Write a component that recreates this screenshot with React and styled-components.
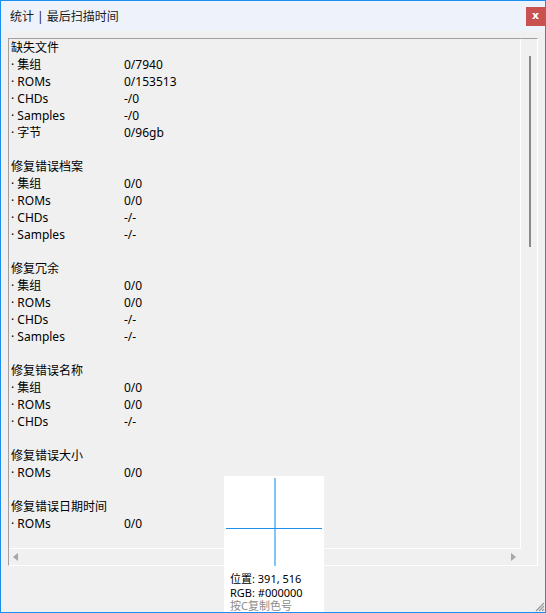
import React from "react";
import styled, { createGlobalStyle } from "styled-components";

const GlobalStyle = createGlobalStyle`
  html, body {
    margin: 0;
    padding: 0;
    background: #f0f0f0;
  }
  * {
    box-sizing: border-box;
  }
`;

const Window = styled.div`
  position: relative;
  width: 546px;
  height: 613px;
  border: 1px solid #1a8ff0;
  background: #f0f0f0;
  display: flex;
  flex-direction: column;
  overflow: hidden;
  font-family: "Noto Sans", "Noto Sans CJK SC", sans-serif;
  font-size: 12px;
  color: #000;
`;

const TitleBar = styled.div`
  height: 30px;
  flex: none;
  background: #eef3fb;
  display: flex;
  align-items: center;
  justify-content: space-between;
  padding-left: 9px;
`;

const Title = styled.span`
  font-size: 12px;
  color: #1a1a1a;
`;

const CloseButton = styled.div`
  width: 19px;
  height: 19px;
  background: #c9514f;
  color: #fff;
  font-weight: bold;
  font-size: 11px;
  line-height: 17px;
  text-align: center;
  font-family: "DejaVu Sans", sans-serif;
`;

const Body = styled.div`
  flex: 1;
  padding: 7px 7px 46px 7px;
  display: flex;
`;

const ListBox = styled.div`
  flex: 1;
  border-top: 1px solid #a0a0a0;
  border-left: 1px solid #a0a0a0;
  border-right: 1px solid #fff;
  border-bottom: 1px solid #fff;
  display: grid;
  grid-template-columns: 512px 16px;
  grid-template-rows: 510px 16px;
`;

const Viewport = styled.div`
  border-right: 1px solid #fff;
  border-bottom: 1px solid #fff;
  padding: 0 0 0 2px;
  overflow: hidden;
`;

const VScroll = styled.div`
  display: flex;
  justify-content: center;
  padding-top: 17px;
`;

const Thumb = styled.div`
  width: 2px;
  height: 191px;
  background: #8a8a8a;
  margin-left: 1px;
`;

const HScroll = styled.div`
  display: flex;
  align-items: center;
  justify-content: space-between;
  padding: 0 5px 0 4px;
`;

const Corner = styled.div``;

const Arrow = styled.div`
  width: 0;
  height: 0;
  border-top: 4px solid transparent;
  border-bottom: 4px solid transparent;
  ${(p) =>
    p.dir === "left"
      ? "border-right: 5px solid #a6a6a6;"
      : "border-left: 5px solid #a6a6a6;"}
`;

const Row = styled.div`
  display: flex;
  height: 17px;
  line-height: 17px;
  white-space: nowrap;
`;

const Heading = styled(Row)``;

const Label = styled.span`
  width: 113px;
  flex: none;
`;

const Value = styled.span``;

const Spacer = styled.div`
  height: 17px;
`;

const Picker = styled.div`
  position: absolute;
  left: 223px;
  top: 475px;
  width: 100px;
  height: 150px;
  background: #fff;
  z-index: 2;
`;

const Crosshair = styled.div`
  position: relative;
  height: 96px;
`;

const VLine = styled.div`
  position: absolute;
  left: 50px;
  top: 2px;
  width: 2px;
  height: 88px;
  background: #80c6f7;
`;

const HLine = styled.div`
  position: absolute;
  left: 2px;
  right: 2px;
  top: 52px;
  height: 1px;
  background: #1e90f0;
`;

const PickerText = styled.div`
  padding-left: 6px;
  font-size: 11px;
  line-height: 13.5px;
  color: ${(p) => (p.muted ? "#8c8c8c" : "#000")};
`;

const Grip = styled.svg`
  position: absolute;
  right: 0;
  bottom: 0;
`;

const sections = [
  {
    title: "缺失文件",
    rows: [
      ["集组", "0/7940"],
      ["ROMs", "0/153513"],
      ["CHDs", "-/0"],
      ["Samples", "-/0"],
      ["字节", "0/96gb"],
    ],
  },
  {
    title: "修复错误档案",
    rows: [
      ["集组", "0/0"],
      ["ROMs", "0/0"],
      ["CHDs", "-/-"],
      ["Samples", "-/-"],
    ],
  },
  {
    title: "修复冗余",
    rows: [
      ["集组", "0/0"],
      ["ROMs", "0/0"],
      ["CHDs", "-/-"],
      ["Samples", "-/-"],
    ],
  },
  {
    title: "修复错误名称",
    rows: [
      ["集组", "0/0"],
      ["ROMs", "0/0"],
      ["CHDs", "-/-"],
    ],
  },
  {
    title: "修复错误大小",
    rows: [["ROMs", "0/0"]],
  },
  {
    title: "修复错误日期时间",
    rows: [["ROMs", "0/0"]],
  },
];

export default function App() {
  return (
    <>
      <GlobalStyle />
      <Window>
        <TitleBar>
          <Title>统计 | 最后扫描时间</Title>
          <CloseButton>x</CloseButton>
        </TitleBar>
        <Body>
          <ListBox>
            <Viewport>
              {sections.map((s, i) => (
                <React.Fragment key={s.title}>
                  {i > 0 && <Spacer />}
                  <Heading>{s.title}</Heading>
                  {s.rows.map(([k, v]) => (
                    <Row key={k}>
                      <Label>· {k}</Label>
                      <Value>{v}</Value>
                    </Row>
                  ))}
                </React.Fragment>
              ))}
            </Viewport>
            <VScroll>
              <Thumb />
            </VScroll>
            <HScroll>
              <Arrow dir="left" />
              <Arrow dir="right" />
            </HScroll>
            <Corner />
          </ListBox>
        </Body>
        <Picker>
          <Crosshair>
            <VLine />
            <HLine />
          </Crosshair>
          <PickerText>位置: 391, 516</PickerText>
          <PickerText>RGB: #000000</PickerText>
          <PickerText muted>按C复制色号</PickerText>
        </Picker>
        <Grip width="11" height="11" viewBox="0 0 11 11">
          <path d="M10 2 L2 10 M10 5 L5 10 M10 8 L8 10" stroke="#9a9a9a" strokeWidth="1.2" />
        </Grip>
      </Window>
    </>
  );
}
